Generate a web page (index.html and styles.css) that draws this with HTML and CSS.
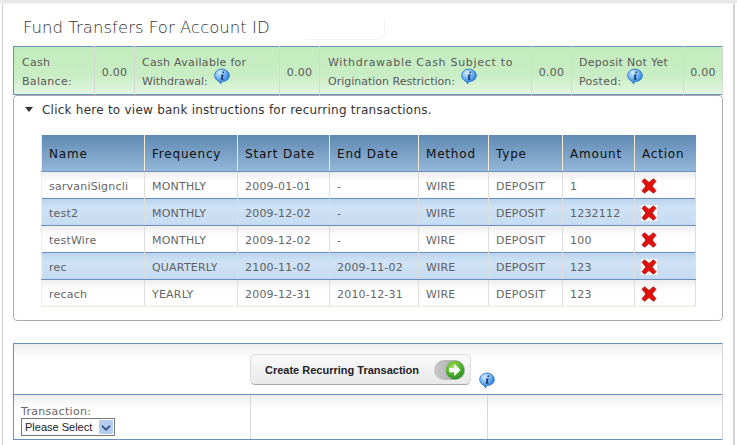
FILE: index.html
```html
<!DOCTYPE html>
<html lang="en">
<head>
<meta charset="utf-8">
<title>Fund Transfers</title>
<link rel="stylesheet" href="styles.css">
</head>
<body>
<svg class="defs" width="0" height="0" aria-hidden="true">
  <defs>
    <radialGradient id="bub" cx="35%" cy="25%" r="80%">
      <stop offset="0" stop-color="#d8ecff"/><stop offset=".55" stop-color="#66aef2"/><stop offset="1" stop-color="#1668c8"/>
    </radialGradient>
    <symbol id="info" viewBox="0 0 16 16">
      <path d="M8 .6C3.900.6.700 3.400.700 7c0 2.600 1.700 4.800 4.100 5.700.6 1 1.200 1.900 2.200 2.700-.1-.9-.1-1.600.1-2.300h.9c4.100 0 7.300-2.800 7.300-6.100S12.100.6 8 .6z" fill="url(#bub)" stroke="#1a6cc4" stroke-width=".8"/>
      <path d="M8.700 3.100h1.500l-.3 1.500H8.400zM8.100 6h1.500l-.9 4.300h.9l-.2.900H6.700l.9-4.300h-.8l.2-.9z" fill="#17386a"/>
    </symbol>
    <symbol id="del" viewBox="0 0 16 16">
      <path d="M1 3.300 3.500 .8 8 4.400 12.500.8 15 3.300 11 8l4 4.700-2.500 2.500L8 11.600l-4.500 3.600L1 12.700 5 8z" fill="#e0100c" stroke="#a80a08" stroke-width=".8" stroke-linejoin="round"/>
    </symbol>
  </defs>
</svg>
<main class="page">
  <h1 class="title">Fund Transfers For Account ID<span class="masked"></span></h1>

  <table class="balances">
    <tr>
      <td class="b1">Cash Balance:</td><td class="amt a1">0.00</td>
      <td class="b2">Cash Available for <span class="tight">Withdrawal:</span> <svg class="info"><use href="#info"/></svg></td><td class="amt a2">0.00</td>
      <td class="b3">Withdrawable Cash Subject to <span class="tight">Origination Restriction:</span> <svg class="info"><use href="#info"/></svg></td><td class="amt a3">0.00</td>
      <td class="b4">Deposit Not Yet Posted: <svg class="info"><use href="#info"/></svg></td><td class="amt a4">0.00</td>
    </tr>
  </table>

  <section class="panel">
    <p class="toggle"><span class="arrow"></span>Click here to view bank instructions for recurring transactions.</p>
    <table class="grid">
      <thead>
        <tr><th class="c1">Name</th><th class="c2">Frequency</th><th class="c3">Start Date</th><th class="c4">End Date</th><th class="c5">Method</th><th class="c6">Type</th><th class="c7">Amount</th><th class="c8">Action</th></tr>
      </thead>
      <tbody>
        <tr><td>sarvaniSigncli</td><td>MONTHLY</td><td>2009-01-01</td><td>-</td><td>WIRE</td><td>DEPOSIT</td><td>1</td><td><svg class="del"><use href="#del"/></svg></td></tr>
        <tr class="alt"><td>test2</td><td>MONTHLY</td><td>2009-12-02</td><td>-</td><td>WIRE</td><td>DEPOSIT</td><td>1232112</td><td><svg class="del"><use href="#del"/></svg></td></tr>
        <tr><td>testWire</td><td>MONTHLY</td><td>2009-12-02</td><td>-</td><td>WIRE</td><td>DEPOSIT</td><td>100</td><td><svg class="del"><use href="#del"/></svg></td></tr>
        <tr class="alt"><td>rec</td><td>QUARTERLY</td><td>2100-11-02</td><td>2009-11-02</td><td>WIRE</td><td>DEPOSIT</td><td>123</td><td><svg class="del"><use href="#del"/></svg></td></tr>
        <tr><td>recach</td><td>YEARLY</td><td>2009-12-31</td><td>2010-12-31</td><td>WIRE</td><td>DEPOSIT</td><td>123</td><td><svg class="del"><use href="#del"/></svg></td></tr>
      </tbody>
    </table>
  </section>

  <section class="create">
    <div class="actions">
      <button class="btn" type="button">Create Recurring Transaction
        <span class="switch"><svg viewBox="0 0 24 24" class="go"><defs><radialGradient id="gb" cx="40%" cy="30%" r="75%"><stop offset="0" stop-color="#9be04a"/><stop offset="1" stop-color="#1c8c1c"/></radialGradient></defs><circle cx="12" cy="12" r="11" fill="url(#gb)"/><path d="M11 4.500 18.500 12 11 19.500v-4.800H5V9.300h6z" fill="#fff"/></svg></span>
      </button>
      <svg class="info info-btn"><use href="#info"/></svg>
    </div>
    <div class="fields">
      <div class="field">
        <label for="tx">Transaction:</label>
        <div class="select-wrap">
          <select id="tx"><option>Please Select</option></select>
          <svg class="chevron" viewBox="0 0 14 14"><rect width="14" height="14" rx="1" fill="#b4ccf0"/><path d="M3.500 5 7 8.500 10.500 5l1 1.500L7 11 2.500 6.500z" fill="#2f4f86"/></svg>
        </div>
      </div>
      <div class="field"></div>
      <div class="field"></div>
    </div>
  </section>
</main>
</body>
</html>
```
FILE: styles.css
```css
* { box-sizing: border-box; }
html, body { margin: 0; padding: 0; }
body { width: 737px; height: 445px; overflow: hidden; background: #fff; border-top: 3px solid #e9e9e9; font-family: "DejaVu Sans", Verdana, sans-serif; color: #555; }
.defs { position: absolute; }
.page { width: 733px; height: 442px; margin: 0 0 0 2px; padding: 0 0 0 10px; background: #fff; border-left: 1px solid #cfcfcf; border-right: 2px solid #d4d4d4; border-top: 1px solid #f2f2f2; }
.title { margin: 0; height: 42px; padding: 13px 0 0 10px; display: flex; font-size: 16.500px; line-height: 22px; font-weight: 200; letter-spacing: .03px; color: #333; }
.masked { width: 80px; height: 22px; margin: 1px 0 0 35px; border-right: 1px solid #f3f3f3; border-bottom: 1px solid #f3f3f3; border-radius: 0 0 7px 0; }

.balances { width: 710px; height: 49px; border-collapse: collapse; table-layout: fixed; border-top: 1px solid #6a90bd; border-bottom: 1px solid #6a90bd; background: linear-gradient(#c2ecbd, #c8edc4 60%, #e4f6e2); font-size: 11px; line-height: 19px; letter-spacing: .3px; color: #5a5a5a; }
.balances td { padding: 3px 0 0 8px; border-right: 1px solid #d4d9d4; vertical-align: middle; }
.balances tr td:first-child { border-left: 1px solid #6a90bd; }
.balances td:last-child { border-right: 1px solid #d4d9d4; }
.b1 { width: 81px; } .a1 { width: 40px; } .b2 { width: 145px; } .a2 { width: 40px; } .b3 { width: 212px; letter-spacing: .7px; } .a3 { width: 40px; } .b4 { width: 112px; } .a4 { width: auto; }
.balances .b2, .balances .b4 { padding-left: 7px; }
.balances .amt { padding: 3px 0 0; text-align: center; }
.tight { letter-spacing: 0; }
.info { width: 16px; height: 17px; margin: -4px 0 0 2px; vertical-align: 0; }

.panel { width: 710px; height: 226px; margin-top: 0; border: 1px solid #aaa; border-radius: 4px; padding: 0 0 0 27px; }
.toggle { margin: 0; height: 28px; font-size: 12px; line-height: 17px; color: #333; display: flex; align-items: center; letter-spacing: .24px; }
.arrow { width: 0; height: 0; margin: 0 9px 2px -16px; border-left: 4px solid transparent; border-right: 4px solid transparent; border-top: 5px solid #333; }

.grid { width: 655px; margin-top: 11px; border-collapse: collapse; table-layout: fixed; font-size: 11px; letter-spacing: .2px; }
.grid th { height: 36px; padding: 3px 0 0 7px; text-align: left; font-weight: 400; font-size: 12px; letter-spacing: .8px; color: #111; background: linear-gradient(#5f89b2, #94b6d8); border-left: 1px solid #f2ead0; border-bottom: 1px solid #6a90bd; }
.grid td { height: 27px; padding: 4px 0 0 7px; color: #666; background: linear-gradient(#ececec, #fff 40%); border-left: 1px solid #ddd; border-right: 1px solid #ddd; }
.grid td:first-child { border-left-color: #f3eedc; }
.grid tbody tr:last-child td { border-bottom: 1px solid #f3eedc; }
.grid .alt td { background: linear-gradient(#b9d3ec, #cfe2f5 35%, #c6dcf2); border-top: 1px solid #6a90bd; border-bottom: 1px solid #6a90bd; color: #606060; }
.c1 { width: 103px; } .c2 { width: 93px; } .c3 { width: 92px; } .c4 { width: 89px; } .c5 { width: 70px; } .c6 { width: 74px; } .c7 { width: 72px; } .c8 { width: auto; }
.del { width: 16px; height: 16px; display: block; margin: -2px 0 0 -1px; }
.alt .del { background: #fff; }

.create { width: 710px; height: 97px; margin-top: 22px; border-top: 1px solid #6a90bd; border-bottom: 1px solid #6a90bd; border-left: 1px solid #6a90bd; border-right: 1px solid #d8d8d8; background: #fff; }
.actions { height: 51px; display: flex; align-items: flex-start; padding: 10px 0 0 236px; background: linear-gradient(#eee, #fff 14px); border-bottom: 1px solid #6a90bd; }
.btn { width: 221px; height: 31px; padding: 0 0 0 14px; display: flex; align-items: center; justify-content: space-between; border: 1px solid #ddd; border-bottom: 1px solid #aaa; border-radius: 5px; background: linear-gradient(#fbfbfb, #e8e8e8); font: 700 11px "Liberation Sans", Arial, sans-serif; color: #222; }
.switch { width: 31px; height: 20px; margin-right: 5px; border-radius: 10px; background: linear-gradient(90deg, #c8c8c8, #a4a4a4); display: flex; justify-content: flex-end; align-items: center; }
.go { width: 20px; height: 20px; }
.info-btn { margin: 18px 0 0 8px; }
.fields { height: 44px; display: flex; background: linear-gradient(#eee, #fff 14px); }
.field { border-right: 1px solid #d8d8d8; flex: 0 0 237px; padding: 10px 0 0 7px; font-size: 11px; letter-spacing: .3px; }
.field:last-child { border-right: 0; flex: 1; }
.field label { display: block; line-height: 13px; color: #666; }
.select-wrap { position: relative; width: 94px; height: 18px; }
.field select { display: block; width: 94px; height: 18px; font: 11px "Liberation Sans", Arial, sans-serif; color: #222; background: #fff; border: 1px solid #777; padding: 0 0 0 3px; appearance: none; border-radius: 0; }
.chevron { position: absolute; top: 2px; right: 2px; width: 14px; height: 14px; pointer-events: none; }
```
